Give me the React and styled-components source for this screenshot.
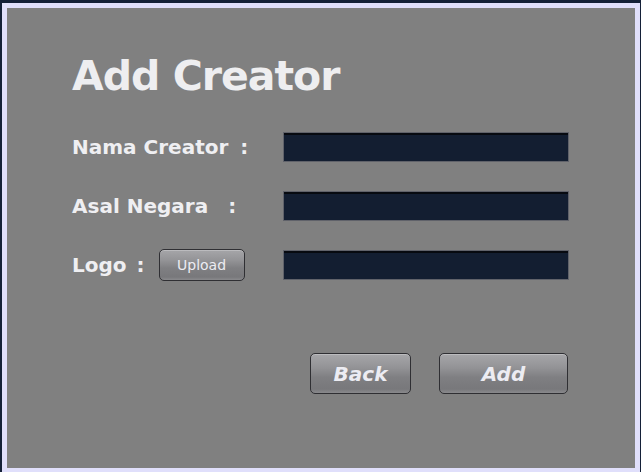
import React from "react";
import styled, { createGlobalStyle } from "styled-components";

const Global = createGlobalStyle`
  html, body { margin: 0; padding: 0; background: #142038; }
  #root { width: 641px; height: 472px; }
`;

const Frame = styled.div`
  box-sizing: border-box;
  width: 641px;
  height: 472px;
  background: #142038;
  padding: 3px 1px 0 2px;
  display: flex;
`;

const Border = styled.div`
  box-sizing: border-box;
  flex: 1;
  background: #e0dffb;
  padding: 5px 5px 4px 5px;
  display: flex;
`;

const Panel = styled.div`
  flex: 1;
  background: #808080;
  padding: 44px 0 0 65px;
  box-sizing: border-box;
  font-family: "Comic Sans MS", "DejaVu Sans", sans-serif;
  color: #efeff2;
`;

const Content = styled.div`
  width: 497px;
  display: flex;
  flex-direction: column;
`;

const Title = styled.h1`
  margin: 0;
  font-size: 41px;
  line-height: 48px;
  font-weight: bold;
  letter-spacing: -1px;
  color: #eeeef0;
`;

const Form = styled.div`
  margin-top: 32px;
  display: grid;
  grid-template-columns: 211px 286px;
  grid-auto-rows: 30px;
  row-gap: 29px;
`;

const Label = styled.div`
  display: flex;
  align-items: center;
  font-size: 20px;
  font-weight: bold;
  white-space: pre;
`;

const Colon = styled.span`
  margin-left: ${(p) => p.$ml}px;
`;

const Input = styled.div`
  box-sizing: border-box;
  border: 1px solid #60626a;
  background: #131e31;
  box-shadow: inset 0 2px 0 #070a10;
`;

const buttonBase = `
  box-sizing: border-box;
  border: 1px solid #2f2f33;
  border-radius: 5px;
  background: linear-gradient(#a6a6a9 0%, #939396 35%, #7f7f82 60%, #78787b 90%, #8a8a8d 100%);
  box-shadow: inset 0 1px 0 rgba(255,255,255,0.25);
  display: flex;
  align-items: center;
  justify-content: center;
  color: #ececf2;
  font-family: "Comic Sans MS", "DejaVu Sans", sans-serif;
`;

const SmallButton = styled.div`
  ${buttonBase}
  width: 86px;
  height: 32px;
  font-size: 14px;
  font-weight: normal;
  margin-left: 14px;
`;

const Actions = styled.div`
  margin-top: 73px;
  display: flex;
  justify-content: flex-end;
  gap: 28px;
  padding-right: 1px;
`;

const BigButton = styled.div`
  ${buttonBase}
  width: ${(p) => p.$w}px;
  height: 41px;
  font-size: 20px;
  font-weight: bold;
  font-style: italic;
`;

export default function App() {
  return (
    <>
      <Global />
      <Frame>
        <Border>
          <Panel>
            <Content>
              <Title>Add Creator</Title>
              <Form>
                <Label>
                  Nama Creator<Colon $ml={12}>:</Colon>
                </Label>
                <Input />
                <Label>
                  Asal Negara<Colon $ml={20}>:</Colon>
                </Label>
                <Input />
                <Label>
                  Logo<Colon $ml={10}>:</Colon>
                  <SmallButton>Upload</SmallButton>
                </Label>
                <Input />
              </Form>
              <Actions>
                <BigButton $w={101}>Back</BigButton>
                <BigButton $w={129}>Add</BigButton>
              </Actions>
            </Content>
          </Panel>
        </Border>
      </Frame>
    </>
  );
}
